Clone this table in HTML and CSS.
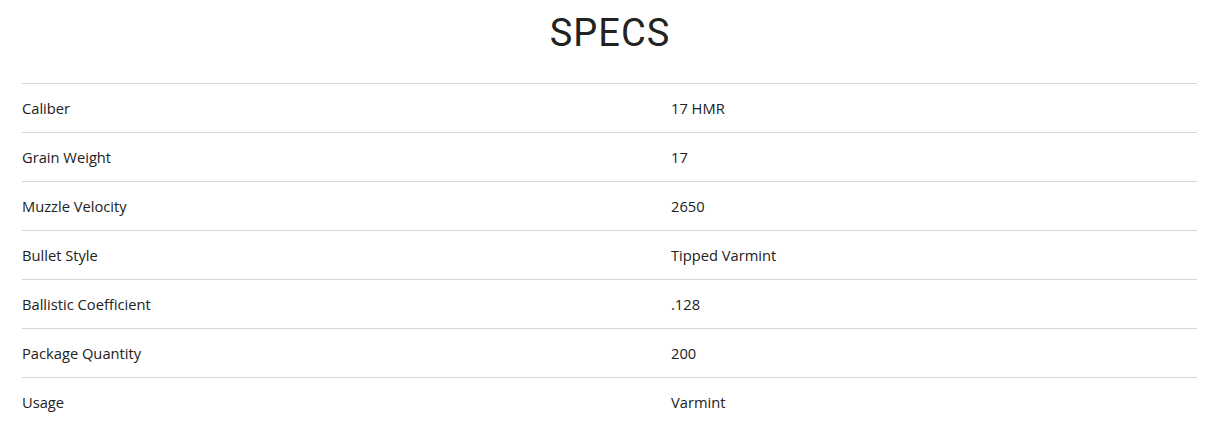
FILE: index.html
```html
<!DOCTYPE html>
<html>
<head>
<meta charset="utf-8">
<link rel="stylesheet" href="styles.css">
</head>
<body>
<section class="specs">
  <h2 class="specs-title">SPECS</h2>
  <div class="specs-table">
    <div class="row"><div class="label">Caliber</div><div class="value">17 HMR</div></div>
    <div class="row"><div class="label">Grain Weight</div><div class="value">17</div></div>
    <div class="row"><div class="label">Muzzle Velocity</div><div class="value">2650</div></div>
    <div class="row"><div class="label">Bullet Style</div><div class="value">Tipped Varmint</div></div>
    <div class="row"><div class="label">Ballistic Coefficient</div><div class="value">.128</div></div>
    <div class="row"><div class="label">Package Quantity</div><div class="value">200</div></div>
    <div class="row"><div class="label">Usage</div><div class="value">Varmint</div></div>
  </div>
</section>
</body>
</html>
```
FILE: styles.css
```css
html, body {
  margin: 0;
  padding: 0;
  background: #fff;
}
.specs {
  padding: 0 22px 0 22px;
  color: #222;
}
.specs-title {
  margin: 0;
  padding-top: 11px;
  height: 83px;
  box-sizing: border-box;
  text-align: center;
  font-family: "Roboto", "Liberation Sans", sans-serif;
  font-weight: 400;
  font-size: 38px;
  line-height: 44px;
  letter-spacing: 1px;
  text-indent: 1px;
  color: #222;
}
.specs-table {
  border-top: 1px solid #d6d6d6;
}
.row {
  display: grid;
  grid-template-columns: 649px 1fr;
  height: 48px;
  align-items: center;
  border-bottom: 1px solid #d6d6d6;
  font-family: "Open Sans", "Liberation Sans", sans-serif;
  font-size: 14.7px;
  color: #222;
}
.row:last-child {
  border-bottom: none;
}
```
